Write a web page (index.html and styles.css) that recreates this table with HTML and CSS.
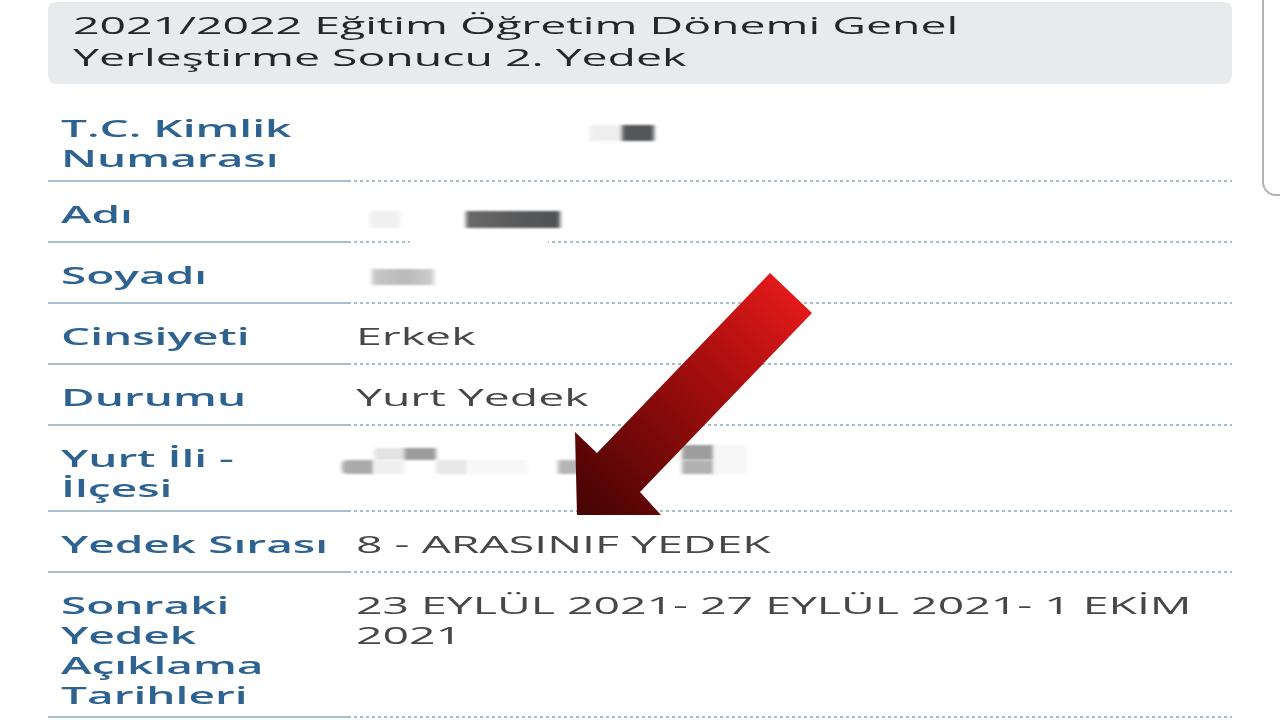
FILE: index.html
```html
<!DOCTYPE html>
<html lang="tr">
<head>
<meta charset="utf-8">
<title>Genel Yerleştirme Sonucu</title>
<link rel="stylesheet" href="styles.css">
</head>
<body>
<div class="page">
  <div class="title-box">2021/2022 Eğitim Öğretim Dönemi Genel Yerleştirme Sonucu 2. Yedek</div>
  <div class="result">
    <div class="row row-tight">
      <div class="label">T.C. Kimlik Numarası</div>
      <div class="value">
        <span class="blur b1a"></span><span class="blur b1b"></span>
      </div>
    </div>
    <div class="row">
      <div class="label">Adı</div>
      <div class="value">
        <span class="blur b2a"></span><span class="blur b2b"></span><span class="smear"></span>
      </div>
    </div>
    <div class="row">
      <div class="label">Soyadı</div>
      <div class="value">
        <span class="blur b3a"></span>
      </div>
    </div>
    <div class="row">
      <div class="label">Cinsiyeti</div>
      <div class="value">Erkek</div>
    </div>
    <div class="row">
      <div class="label">Durumu</div>
      <div class="value">Yurt Yedek</div>
    </div>
    <div class="row row-tight">
      <div class="label">Yurt İli - İlçesi</div>
      <div class="value">
        <span class="blur y1"></span><span class="blur y2"></span><span class="blur y3"></span>
        <span class="blur y4"></span><span class="blur y5"></span><span class="blur y6"></span>
        <span class="blur y7"></span><span class="blur y8"></span><span class="blur y9"></span>
        <span class="blur y10"></span>
      </div>
    </div>
    <div class="row">
      <div class="label">Yedek Sırası</div>
      <div class="value">8 - ARASINIF YEDEK</div>
    </div>
    <div class="row row-long">
      <div class="label">Sonraki Yedek Açıklama Tarihleri</div>
      <div class="value">23 EYLÜL 2021- 27 EYLÜL 2021- 1 EKİM 2021</div>
    </div>
  </div>
</div>

<div class="frame-edge"></div>

<svg class="arrow" width="1280" height="720" viewBox="0 0 1280 720" aria-hidden="true">
  <defs>
    <linearGradient id="ag" x1="805" y1="285" x2="585" y2="505" gradientUnits="userSpaceOnUse">
      <stop offset="0" stop-color="#ea1b1b"/>
      <stop offset="0.4" stop-color="#a80e0e"/>
      <stop offset="1" stop-color="#4a0404"/>
    </linearGradient>
  </defs>
  <polygon points="770,273 812,313 640,492 661,515 577,515 575,432 597,453" fill="url(#ag)"/>
</svg>
</body>
</html>
```
FILE: styles.css
```css
html, body {
  margin: 0;
  padding: 0;
  background: #ffffff;
  overflow: hidden;
  width: 1280px;
  height: 720px;
}

body {
  position: relative;
  font-family: "Open Sans", "Noto Sans", sans-serif;
  font-size: 23.2px;
}

.page {
  width: 640px;
  transform: scaleX(2);
  transform-origin: 0 0;
  padding-top: 1px;
}

.title-box {
  margin: 1px 24px 0 24px;
  padding: 8px 12px 10.6px 12.5px;
  background: #e8ebee;
  border-radius: 4px / 8px;
  color: #262626;
  line-height: 31.7px;
}

.result {
  margin: 12px 24px 0 24px;
}

.row {
  display: grid;
  grid-template-columns: 150px 1fr;
  line-height: 30px;
}

.label {
  padding: 17px 4px 12px 6.5px;
  font-weight: 600;
  font-size: 23px;
  color: #2e6391;
  border-bottom: 2px solid #a8bfd1;
}

.row-tight .label {
  padding-bottom: 7px;
}

.row-long .label {
  padding-bottom: 6px;
}

.value {
  position: relative;
  padding: 17px 0 14px 4px;
  color: #474747;
  background-image: repeating-linear-gradient(to right, #a9bdcc 0, #a9bdcc 1.6px, transparent 1.6px, transparent 3px);
  background-size: 100% 2px;
  background-position: left bottom;
  background-repeat: no-repeat;
}

.row-tight .value,
.row-long .value {
  padding-bottom: 8px;
}

/* redaction blocks (blurred) — positions in unscaled page units */
.blur {
  position: absolute;
  filter: blur(1px);
}
.b1a { left: 121px; top: 29px; width: 16px; height: 16px; background: #eeeeee; }
.b1b { left: 137px; top: 29px; width: 16px; height: 16px; background: #555657; }

.b2a { left: 11px; top: 29px; width: 15px; height: 17px; background: #f0f0f0; }
.b2b { left: 59px; top: 29px; width: 47px; height: 17px; background: linear-gradient(to right, #6a6a6a, #575859 60%, #505152); }
.smear { position: absolute; left: 31px; width: 69px; bottom: 0; height: 3px; background: #ffffff; }

.b3a { left: 12px; top: 26px; width: 31px; height: 16px; background: linear-gradient(to right, #c8c8c8, #b9b9b9 55%, #cfcfcf); }

.y1 { left: -3px; top: 34px; width: 16px; height: 14px; background: #ababab; border-radius: 3px 0 0 3px; }
.y2 { left: 13px; top: 22px; width: 15px; height: 12px; background: #e3e3e3; }
.y3 { left: 13px; top: 34px; width: 15px; height: 14px; background: #efefef; }
.y4 { left: 28px; top: 22px; width: 16px; height: 12px; background: #9c9c9c; }
.y5 { left: 44px; top: 34px; width: 16px; height: 14px; background: #e8e8e8; }
.y6 { left: 60px; top: 34px; width: 30px; height: 14px; background: #f7f7f7; }
.y7 { left: 105px; top: 34px; width: 12px; height: 14px; background: #b6b6b6; }
.y8 { left: 167px; top: 19px; width: 16px; height: 15px; background: #9d9d9d; }
.y9 { left: 167px; top: 34px; width: 16px; height: 14px; background: #b1b1b1; }
.y10 { left: 183px; top: 19px; width: 16px; height: 29px; background: #f6f6f6; }

.frame-edge {
  position: absolute;
  left: 1262px;
  top: -20px;
  width: 40px;
  height: 214px;
  border-left: 2px solid #b3b3b3;
  border-bottom: 2px solid #b3b3b3;
  border-bottom-left-radius: 14px;
}

.arrow {
  position: absolute;
  left: 0;
  top: 0;
  pointer-events: none;
}
```
